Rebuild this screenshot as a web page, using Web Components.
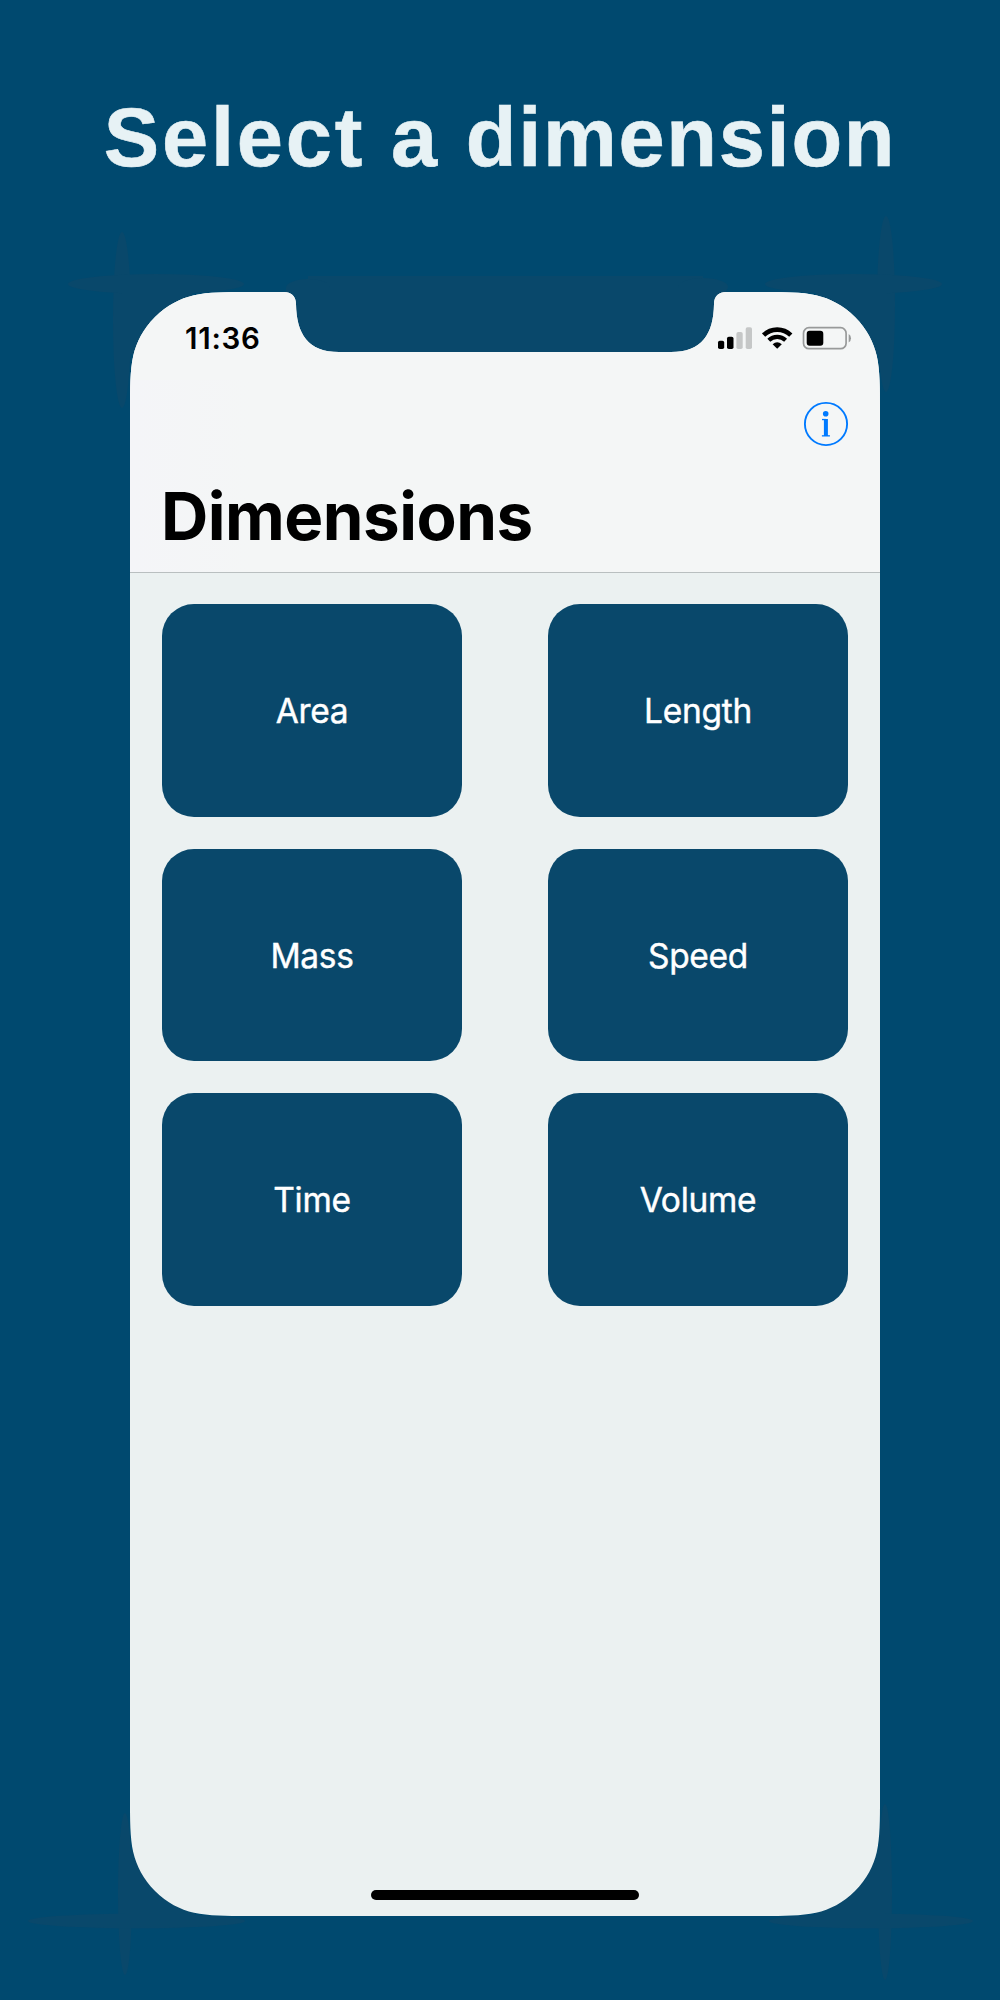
<!DOCTYPE html>
<html lang="en">
<head>
<meta charset="utf-8">
<title>Dimensions</title>
<style>
html, body { margin: 0; background: #00496f; }
.wide { letter-spacing: 2.8px; }
</style>
</head>
<body>
<promo-page>
  <span slot="title"><span class="wide">Select a </span>dimension</span>
  <phone-screen>
    <status-bar time="11:36"></status-bar>
    <nav-header>Dimensions</nav-header>
    <dimension-grid>
      <dimension-card>Area</dimension-card>
      <dimension-card>Length</dimension-card>
      <dimension-card>Mass</dimension-card>
      <dimension-card>Speed</dimension-card>
      <dimension-card>Time</dimension-card>
      <dimension-card>Volume</dimension-card>
    </dimension-grid>
    <home-indicator></home-indicator>
  </phone-screen>
</promo-page>
<script>
const define = (name, html, setup) => customElements.define(name, class extends HTMLElement {
  constructor() {
    super();
    this.attachShadow({ mode: 'open' }).innerHTML = html;
  }
  connectedCallback() { if (setup) setup(this); }
});

define('promo-page', `
<style>
:host { display: flex; flex-direction: column; align-items: center; position: relative; width: 1000px; height: 2000px; overflow: hidden; background: #00496f; }
svg { position: absolute; inset: 0; z-index: 0; }
h1 { margin: 0; padding-top: 88px; height: 292px; box-sizing: border-box; font: bold 83px/100px "Liberation Sans", Arial, sans-serif; letter-spacing: 1.700px; color: #e7f2f5; -webkit-text-stroke: .6px #e7f2f5; white-space: nowrap; position: relative; }
.phone { padding-left: 10px; position: relative; }
</style>
<svg width="1000" height="2000" fill="#09486b" aria-hidden="true">
  <ellipse cx="122" cy="320" rx="9" ry="88"/><ellipse cx="156" cy="284" rx="88" ry="10"/>
  <rect x="122" y="284" width="70" height="70"/>
  <ellipse cx="886" cy="304" rx="9" ry="88"/><ellipse cx="853.5" cy="284" rx="88.5" ry="10"/>
  <rect x="816" y="284" width="70" height="70"/>
  <ellipse cx="125" cy="1894" rx="7" ry="81"/><ellipse cx="136.5" cy="1921" rx="108.5" ry="7.3"/>
  <rect x="125" y="1850" width="70" height="71"/>
  <ellipse cx="885" cy="1892" rx="7" ry="88"/><ellipse cx="871" cy="1921" rx="102" ry="7.3"/>
  <rect x="815" y="1850" width="70" height="71"/>
  <rect x="308" y="276" width="395" height="90"/>
  <ellipse cx="308" cy="288" rx="22" ry="9"/><ellipse cx="703" cy="287" rx="25" ry="9"/>
  <rect x="286" y="288" width="440" height="70"/>
</svg>
<h1><slot name="title"></slot></h1>
<div class="phone"><slot></slot></div>`);

/* Continuous-curvature corners with the sensor notch cut out of the top edge. */
function screenPath(w, h) {
  const a = 115, b = 98, c = 78, d = 64, e = 3.2, i = 50, j = 6.5, k = 37, l = 13, m = 25;
  return `M${a} 0 H154 C161 0 166 4 166 12 C166.500 42 178 60 209 60 H541 C572 60 583.500 42 584 12 C584 4 589 0 596 0 ` +
    `H${w - a} C${w - b} 0 ${w - c} 0 ${w - d} ${e} C${w - i} ${j} ${w - k} ${l} ${w - m} ${m} C${w - l} ${k} ${w - j} ${i} ${w - e} ${d} C${w} ${c} ${w} ${b} ${w} ${a} ` +
    `V${h - a} C${w} ${h - b} ${w} ${h - c} ${w - e} ${h - d} C${w - j} ${h - i} ${w - l} ${h - k} ${w - m} ${h - m} C${w - k} ${h - l} ${w - i} ${h - j} ${w - d} ${h - e} C${w - c} ${h} ${w - b} ${h} ${w - a} ${h} ` +
    `H${a} C${b} ${h} ${c} ${h} ${d} ${h - e} C${i} ${h - j} ${k} ${h - l} ${m} ${h - m} C${l} ${h - k} ${j} ${h - i} ${e} ${h - d} C0 ${h - c} 0 ${h - b} 0 ${h - a} ` +
    `V${a} C0 ${b} 0 ${c} ${e} ${d} C${j} ${i} ${l} ${k} ${m} ${m} C${k} ${l} ${i} ${j} ${d} ${e} C${c} 0 ${b} 0 ${a} 0 Z`;
}
define('phone-screen', `
<style>
:host { display: flex; flex-direction: column; width: 750px; height: 1624px; background: #ebf1f1; font-family: Inter, "Liberation Sans", sans-serif; }
</style><slot></slot>`, el => { el.style.clipPath = `path("${screenPath(750, 1624)}")`; });

define('status-bar', `
<style>
:host { display: flex; justify-content: space-between; height: 88px; box-sizing: border-box; padding: 26px 28px 0 55px; background: #f4f6f6; color: #000; }
time { font-size: 29.500px; font-weight: 600; line-height: 40px; letter-spacing: .75px; }
svg { display: block; margin-top: 6px; }
</style>
<time></time>
<svg width="136" height="28" viewBox="716 324 136 28" aria-hidden="true">
  <rect x="718" y="340.700" width="6.200" height="8.300" rx="1.800"/>
  <rect x="727" y="336.700" width="6.500" height="12.300" rx="1.800"/>
  <g fill="#c5c7c7"><rect x="736.400" y="332" width="6.300" height="17" rx="1.800"/><rect x="745.700" y="327.200" width="6.300" height="21.800" rx="1.800"/></g>
  <g fill="none" stroke="#000"><path d="M763.600 335.200 A19.500 19.500 0 0 1 790.800 335.200" stroke-width="4.600"/><path d="M768.800 340.300 A12.200 12.200 0 0 1 785.600 340.300" stroke-width="4.200"/></g>
  <path d="M777.200 348.700 L772.600 344.200 Q777.200 340.400 781.800 344.200 Z"/>
  <rect x="803.500" y="327.700" width="42.600" height="21" rx="5.500" fill="none" stroke="#989a9a" stroke-width="1.700"/>
  <rect x="806.700" y="330.700" width="16.600" height="15" rx="3"/>
  <path d="M848.700 334 Q851 335.500 851 338.200 Q851 341 848.700 342.400 Z" fill="#989a9a"/>
</svg>`, el => { el.shadowRoot.querySelector('time').textContent = el.getAttribute('time'); });

define('nav-header', `
<style>
:host { display: flex; flex-direction: column; height: 193px; box-sizing: border-box; padding: 0 31px; background: linear-gradient(90deg,#f4f5f8 0,#f4f6f6 120px); border-bottom: 1px solid #b9bfc0; color: #000; }
info-icon { align-self: flex-end; margin-top: 21px; }
h2 { margin: 30px 0 0; font-size: 65.500px; line-height: 80px; font-weight: 700; letter-spacing: -.5px; }
</style>
<info-icon></info-icon><h2><slot></slot></h2>`);

define('info-icon', `
<style>:host { display: block; width: 46px; height: 46px; } svg { display: block; }</style>
<svg width="46" height="46" viewBox="803 401 46 46" fill="#007aff" aria-label="Info">
  <circle cx="826" cy="424" r="21.100" fill="none" stroke="#007aff" stroke-width="1.900"/>
  <circle cx="825.700" cy="413.800" r="2.800"/>
  <rect x="823.900" y="419" width="4" height="17"/>
  <rect x="822" y="418.900" width="4" height="1.300"/>
  <rect x="821.900" y="435.200" width="8" height="1.300"/>
</svg>`);

define('dimension-grid', `
<style>
:host { display: grid; grid-template-columns: 300px 300px; justify-content: space-between; grid-auto-rows: 212.500px; row-gap: 32px; padding: 31px 32px 0; }
</style><slot></slot>`);

define('dimension-card', `
<style>
:host { display: flex; align-items: center; justify-content: center; box-sizing: border-box; padding-top: 2px; border-radius: 32px; background: #09486b; color: #fff; font-size: 33.500px; line-height: 42px; letter-spacing: -.3px; -webkit-text-stroke: .4px #fff; }
</style><span><slot></slot></span>`);

define('home-indicator', `
<style>
:host { display: block; width: 268.500px; height: 10.300px; border-radius: 5.200px; background: #000; margin: auto auto 16px; }
</style>`);
</script>
</body>
</html>
